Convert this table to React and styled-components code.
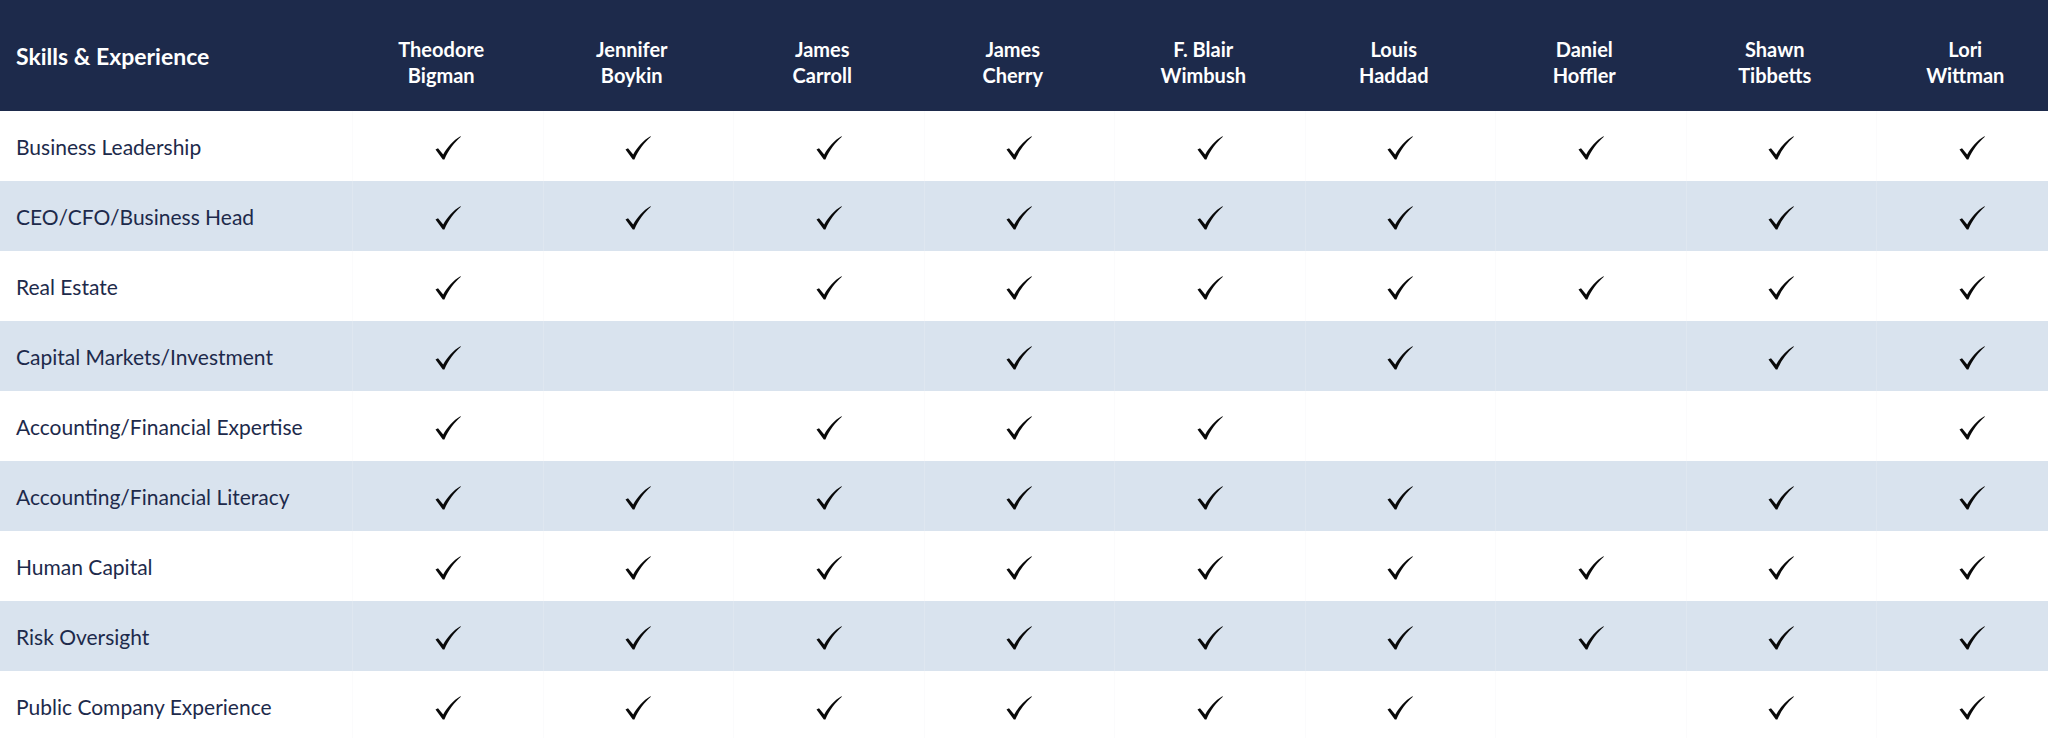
import React from 'react'
import styled, { createGlobalStyle } from 'styled-components'

const GlobalStyle = createGlobalStyle`
  html, body {
    margin: 0;
    padding: 0;
    overflow: hidden;
    background: #ffffff;
  }
`

const columns = '352px repeat(9, 190.5px)'

const directors = [
  ['Theodore', 'Bigman'],
  ['Jennifer', 'Boykin'],
  ['James', 'Carroll'],
  ['James', 'Cherry'],
  ['F. Blair', 'Wimbush'],
  ['Louis', 'Haddad'],
  ['Daniel', 'Hoffler'],
  ['Shawn', 'Tibbetts'],
  ['Lori', 'Wittman'],
]

const skills = [
  ['Business Leadership', [1, 1, 1, 1, 1, 1, 1, 1, 1]],
  ['CEO/CFO/Business Head', [1, 1, 1, 1, 1, 1, 0, 1, 1]],
  ['Real Estate', [1, 0, 1, 1, 1, 1, 1, 1, 1]],
  ['Capital Markets/Investment', [1, 0, 0, 1, 0, 1, 0, 1, 1]],
  ['Accounting/Financial Expertise', [1, 0, 1, 1, 1, 0, 0, 0, 1]],
  ['Accounting/Financial Literacy', [1, 1, 1, 1, 1, 1, 0, 1, 1]],
  ['Human Capital', [1, 1, 1, 1, 1, 1, 1, 1, 1]],
  ['Risk Oversight', [1, 1, 1, 1, 1, 1, 1, 1, 1]],
  ['Public Company Experience', [1, 1, 1, 1, 1, 1, 0, 1, 1]],
]

const Matrix = styled.div`
  width: 2066px;
  font-family: Lato, 'Open Sans', sans-serif;
`

const HeaderRow = styled.div`
  display: grid;
  grid-template-columns: ${columns};
  height: 111px;
  background: #1d2a4b;
  color: #ffffff;
  font-weight: 700;
`

const HeaderTitle = styled.div`
  display: flex;
  align-items: center;
  padding-left: 16px;
  font-size: 23px;
`

const HeaderName = styled.div`
  display: flex;
  flex-direction: column;
  align-items: center;
  justify-content: center;
  font-size: 20px;
  line-height: 26px;
  padding: 13px 12px 0 0;
`

const Row = styled.div`
  display: grid;
  grid-template-columns: ${columns};
  height: 70px;
  background: ${(p) => (p.$alt ? '#d9e3ee' : '#ffffff')};
`

const Label = styled.div`
  display: flex;
  align-items: center;
  padding-left: 16px;
  font-size: 21px;
  color: #1d2a4b;
`

const Cell = styled.div`
  display: flex;
  align-items: center;
  justify-content: center;
  border-left: 1px solid ${(p) => (p.$alt ? '#dfe7f0' : '#fbfbfc')};
  padding-top: 3px;
`

const Check = () => (
  <svg width="26" height="24" viewBox="0 0 26 24">
    <path
      d="M0.5 13.6 L3 12.2 L8.2 18.4 C12.2 11.2 18.2 4.4 25.4 0.2 L25.9 0.8 C19.2 6.6 13.4 14 9.4 23.6 L7.8 23.6 Z"
      fill="#0a0a0a"
    />
  </svg>
)

export default function App() {
  return (
    <>
      <GlobalStyle />
      <Matrix>
        <HeaderRow>
          <HeaderTitle>Skills &amp; Experience</HeaderTitle>
          {directors.map(([first, last]) => (
            <HeaderName key={first + last}>
              <span>{first}</span>
              <span>{last}</span>
            </HeaderName>
          ))}
        </HeaderRow>
        {skills.map(([skill, marks], i) => (
          <Row key={skill} $alt={i % 2 === 1}>
            <Label>{skill}</Label>
            {marks.map((m, j) => (
              <Cell key={j} $alt={i % 2 === 1}>
                {m ? <Check /> : null}
              </Cell>
            ))}
          </Row>
        ))}
      </Matrix>
    </>
  )
}
